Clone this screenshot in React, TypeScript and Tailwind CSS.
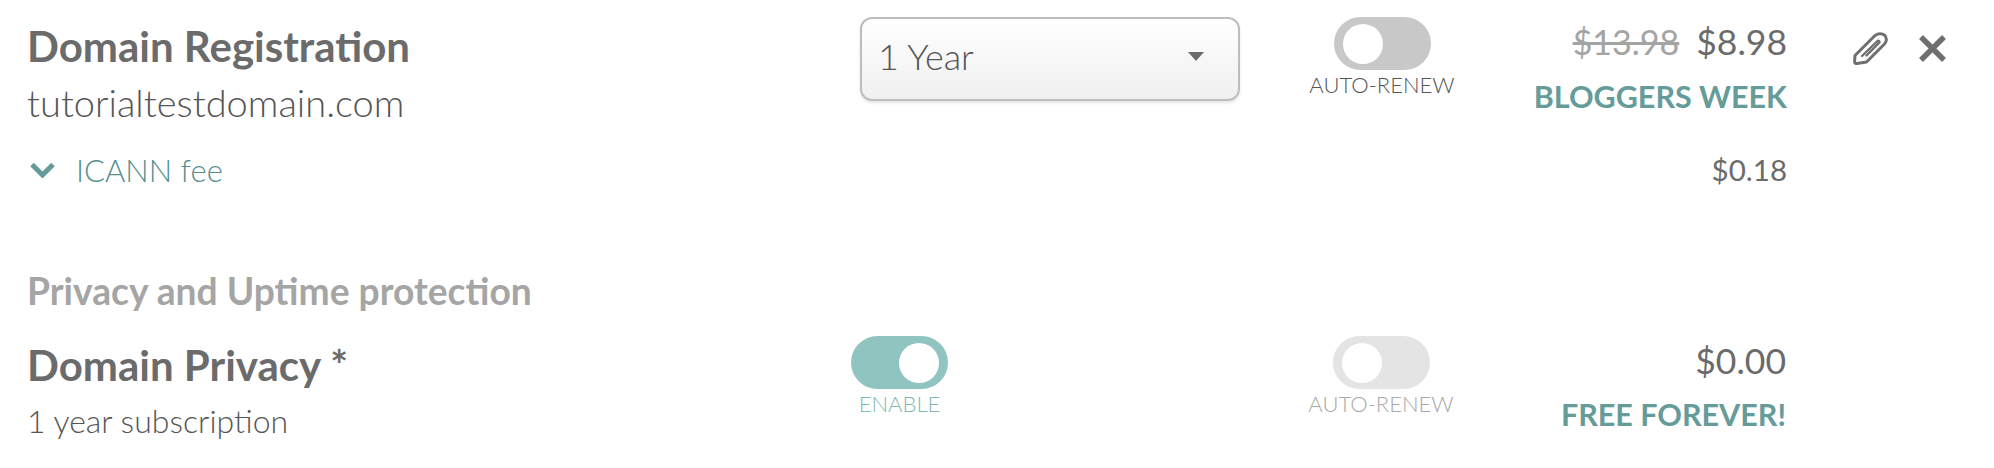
const font = { fontFamily: 'Lato, "Noto Sans", sans-serif' }

function Toggle({ on, tone }: { on?: boolean; tone: string }) {
  return (
    <div className={`flex h-[53px] w-[97px] items-center rounded-full px-[9px] ${tone} ${on ? 'justify-end' : 'justify-start'}`}>
      <div className="h-[40px] w-[40px] rounded-full bg-white" />
    </div>
  )
}

function Paperclip() {
  return (
    <svg viewBox="0 0 35 33" className="h-[33px] w-[35px]" fill="none" stroke="#6f6f6f" strokeWidth="3" strokeLinejoin="round" strokeLinecap="round">
      <path d="M2 23.5 L21.5 4 C24.5 1 29 1 31.5 3.2 C34 5.5 34 9.5 31.5 12 L13.5 30 L4 31.5 C2.5 31.8 1.5 30.8 1.6 29.5 Z" />
      <path d="M9 24 L24 9.5 C25.5 8 27.5 9.5 26 11 L13.5 23.5" strokeWidth="2.4" />
    </svg>
  )
}

function CloseIcon() {
  return (
    <svg viewBox="0 0 27 27" className="h-[27px] w-[27px]" fill="none" stroke="#6f6f6f" strokeWidth="5.5">
      <path d="M2 2 L25 25 M25 2 L2 25" />
    </svg>
  )
}

function Chevron() {
  return (
    <svg viewBox="0 0 25 16" className="h-[16px] w-[25px]" fill="none" stroke="#659c9a" strokeWidth="5">
      <path d="M2 2.5 L12.5 13 L23 2.5" />
    </svg>
  )
}

export default function App() {
  return (
    <div style={font} className="h-[468px] w-[1994px] overflow-hidden bg-white pl-[27px] pt-[17px] text-[#6b6b6b]">
      <div className="flex items-start">
        <div className="w-[833px]">
          <div className="mt-[5px] text-[42px] font-bold leading-[48px]">Domain Registration</div>
          <div className="mt-[10px] text-[38px] font-light leading-[44px] text-[#555555]">tutorialtestdomain.com</div>
        </div>
        <div className="flex h-[84px] w-[380px] items-center justify-between rounded-[12px] border-2 border-[#bdbdbd] bg-gradient-to-b from-white to-[#f0f0f0] pb-[6px] pl-[16px] pr-[34px] text-[36px] font-light text-[#555555] shadow-[0_2px_3px_rgba(0,0,0,0.1)]">
          <span>1 Year</span>
          <div className="h-0 w-0 border-x-[8px] border-t-[9px] border-x-transparent border-t-[#6b6b6b]" />
        </div>
        <div className="ml-[69px] flex w-[146px] flex-col items-center">
          <Toggle tone="bg-[#c8c8c8]" />
          <div className="mt-[2px] text-[22px] font-light leading-[26px] text-[#555555]">AUTO-RENEW</div>
        </div>
        <div className="flex w-[332px] flex-col items-end">
          <div className="mt-[3px] flex h-[44px] items-baseline gap-[17px] leading-[44px]">
            <span className="text-[34px] text-[#a4a4a4] line-through">$13.98</span>
            <span className="text-[35.5px]">$8.98</span>
          </div>
          <div className="mt-[14px] text-[30.5px] font-bold leading-[36px] text-[#659c9a]">BLOGGERS WEEK</div>
        </div>
        <div className="ml-[66px] mt-[15px] flex items-center gap-[31px]">
          <Paperclip />
          <CloseIcon />
        </div>
      </div>

      <div className="mt-[26px] flex items-center justify-between pr-[207px]">
        <div className="flex items-center text-[#548f8c]">
          <div className="ml-[3px] flex">
            <Chevron />
          </div>
          <span className="ml-[21px] text-[31px] font-light leading-[40px]">ICANN fee</span>
        </div>
        <div className="text-[29.5px] leading-[40px]">$0.18</div>
      </div>

      <div className="mt-[81px] text-[37.2px] font-bold leading-[40px] text-[#a5a5a5]">Privacy and Uptime protection</div>

      <div className="mt-[25px] flex items-start">
        <div className="w-[824px]">
          <div className="mt-[5px] text-[42px] font-bold leading-[48px]">Domain Privacy *</div>
          <div className="mt-[14px] text-[32px] font-light leading-[36px] text-[#555555]">1 year subscription</div>
        </div>
        <div className="flex w-[97px] flex-col items-center">
          <Toggle on tone="bg-[#90c4c1]" />
          <div className="mt-[2px] text-[22px] font-light leading-[26px] text-[#7fb9b6]">ENABLE</div>
        </div>
        <div className="ml-[360px] flex w-[146px] flex-col items-center">
          <Toggle tone="bg-[#e4e4e4]" />
          <div className="mt-[2px] text-[22px] font-light leading-[26px] text-[#a9a9a9]">AUTO-RENEW</div>
        </div>
        <div className="flex w-[332px] flex-col items-end">
          <div className="mt-[3px] text-[35.5px] leading-[44px]">$0.00</div>
          <div className="mt-[14px] text-[30.5px] font-bold leading-[34px] text-[#659c9a]">FREE FOREVER!</div>
        </div>
      </div>
    </div>
  )
}
